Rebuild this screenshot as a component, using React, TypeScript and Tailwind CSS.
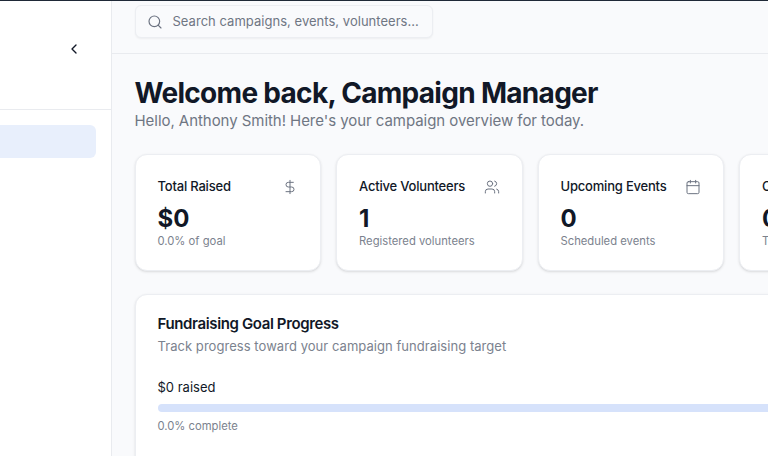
import { Calendar, ChevronLeft, DollarSign, Search, Target, Users } from "lucide-react"
import type React from "react"

interface Stat {
  title: string
  value: string
  note: string
  icon: React.ElementType
}

const stats: Stat[] = [
  { title: "Total Raised", value: "$0", note: "0.0% of goal", icon: DollarSign },
  { title: "Active Volunteers", value: "1", note: "Registered volunteers", icon: Users },
  { title: "Upcoming Events", value: "0", note: "Scheduled events", icon: Calendar },
  { title: "Open Tasks", value: "0", note: "Tasks pending", icon: Target },
]

const App: React.FC = () => {
  return (
    <div className="h-[456px] w-[768px] overflow-hidden bg-[#f9fafc] font-['Inter',sans-serif] text-[#111827] flex flex-col">
      <div className="h-px shrink-0 bg-[#1f2937]" />
      <div className="flex flex-1 min-h-0">
        <aside className="w-[112px] shrink-0 bg-white border-r border-[#e9ebef] flex flex-col">
          <div className="h-[109px] shrink-0 border-b border-[#e9ebef] flex justify-end items-start pt-[40px] pr-[29px]">
            <ChevronLeft className="w-4 h-4 text-[#111827]" strokeWidth={2} />
          </div>
          <div className="pr-[15px] pt-[15px]">
            <div className="h-[33px] rounded-r-md rounded-l-none bg-[#e8effc]" />
          </div>
        </aside>
        <div className="flex-1 min-w-0">
          <header className="h-[53px] border-b border-[#e9ebef] pl-[22.5px] pt-[4px]">
            <div className="w-[298px] h-[33px] rounded-md border border-[#eceef2] bg-[#f9fafc] shadow-xs flex items-center pl-[11px] gap-[10px]">
              <Search className="w-4 h-4 text-[#6b7280]" strokeWidth={1.75} />
              <span className="text-[13px] tracking-[0.03px] text-[#6f7683] whitespace-nowrap">
                Search campaigns, events, volunteers...
              </span>
            </div>
          </header>
          <main className="pl-[22.5px] pt-[21px]">
            <h1 className="text-[28px] leading-9 font-bold tracking-tight">Welcome back, Campaign Manager</h1>
            <p className="text-[15px] leading-6 tracking-[-0.05px] text-[#6f7683] -mt-[2.5px]">
              Hello, Anthony Smith! Here's your campaign overview for today.
            </p>
            <div className="flex gap-[15px] mt-[21.5px]">
              {stats.map((stat) => (
                <div
                  key={stat.title}
                  className="w-[186.5px] h-[117px] shrink-0 rounded-xl bg-white border border-[#eceef2] shadow-sm px-[22px] pt-[22px]"
                >
                  <div className="flex items-center justify-between h-5">
                    <span className="text-[13px] tracking-[-0.2px] font-medium text-[#111827] whitespace-nowrap">
                      {stat.title}
                    </span>
                    <stat.icon className="w-4 h-4 text-[#6b7280]" strokeWidth={1.5} />
                  </div>
                  <div className="text-2xl leading-8 font-bold mt-[6px]">{stat.value}</div>
                  <div className="text-[11.25px] leading-4 text-[#7b828e] -mt-[2px]">{stat.note}</div>
                </div>
              ))}
            </div>
            <section className="w-[700px] mt-[23px] rounded-xl bg-white border border-[#eceef2] shadow-sm px-[22px] pt-[19px] h-[200px]">
              <h2 className="text-[15px] leading-5 font-semibold tracking-tight">Fundraising Goal Progress</h2>
              <p className="text-[13px] leading-5 tracking-[0.05px] text-[#7b828e] mt-[2px]">
                Track progress toward your campaign fundraising target
              </p>
              <p className="text-[13px] leading-5 text-[#111827] mt-[21px]">$0 raised</p>
              <div className="h-2 rounded-full bg-[#d6e2fb] mt-[7px]" />
              <p className="text-[11.25px] leading-4 text-[#7b828e] mt-[6px]">0.0% complete</p>
            </section>
          </main>
        </div>
      </div>
    </div>
  )
}

export default App
